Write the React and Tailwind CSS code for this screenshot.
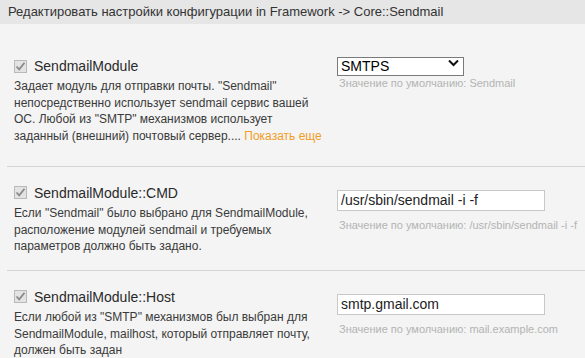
import { useState } from 'react';

// ── Data ─────────────────────────────────────────────────────────────────────

const SETTINGS = [
  {
    key: 'SendmailModule',
    desc: 'Задает модуль для отправки почты. "Sendmail" непосредственно использует sendmail сервис вашей ОС. Любой из "SMTP" механизмов использует заданный (внешний) почтовый сервер....',
    more: true,
    kind: 'select',
    value: 'SMTPS',
    options: ['Sendmail', 'SMTP', 'SMTPS', 'SMTPTLS'],
    def: 'Sendmail',
  },
  {
    key: 'SendmailModule::CMD',
    desc: 'Если "Sendmail" было выбрано для SendmailModule, расположение модулей sendmail и требуемых параметров должно быть задано.',
    kind: 'input',
    value: '/usr/sbin/sendmail -i -f',
    def: '/usr/sbin/sendmail -i -f',
  },
  {
    key: 'SendmailModule::Host',
    desc: 'Если любой из "SMTP" механизмов был выбран для SendmailModule, mailhost, который отправляет почту, должен быть задан',
    kind: 'input',
    value: 'smtp.gmail.com',
    def: 'mail.example.com',
  },
];

// ── Sub-components ───────────────────────────────────────────────────────────

/** Disabled, checked checkbox */
function GrayCheck() {
  return (
    <span className="w-[13px] h-[13px] shrink-0 border border-[#b9b9b9] bg-[#e3e3e3] flex items-center justify-center">
      <svg width="11" height="11" viewBox="0 0 11 11">
        <path d="M1.5 5.5 L4.2 8.3 L9.5 1.8" fill="none" stroke="#8a8a8a" strokeWidth="1.8" />
      </svg>
    </span>
  );
}

function SettingRow({ s, first }) {
  const [value, setValue] = useState(s.value);

  return (
    <div className={first ? 'pt-[32px] pb-[21px]' : 'ml-[7px] border-t border-[#d4d4d4] pt-[16px] pb-[15px]'}>
      <div className={`flex items-start ${first ? '' : '-ml-[7px]'}`}>
        {/* Left: title + description */}
        <div className="w-[337px] pl-[14px] shrink-0">
          <div className="flex items-center gap-[7px] h-[20px]">
            <GrayCheck />
            <span className="text-[14px] leading-[20px] text-[#2a2a2a]">{s.key}</span>
          </div>
          <p className="w-[314px] mt-[2px] text-[12px] leading-[16.7px] text-[#3a3a3a]">
            {s.desc}{' '}
            {s.more && <span className="text-[#f39c1f]">Показать еще</span>}
          </p>
        </div>

        {/* Right: value + default */}
        <div className={first ? '-mt-[2px]' : 'mt-[5px]'}>
          {s.kind === 'select' ? (
            <div className="relative w-[127px] h-[19px]">
              <select
                value={value}
                onChange={(e) => setValue(e.target.value)}
                className="appearance-none w-full h-full bg-white border border-[#7a7a7a] pl-[3px] text-[14px] leading-[17px] text-black outline-none"
              >
                {s.options.map((o) => (
                  <option key={o} value={o}>{o}</option>
                ))}
              </select>
              <svg
                className="absolute right-[5px] top-[5px] pointer-events-none"
                width="11" height="8" viewBox="0 0 11 8"
              >
                <path d="M1 1.5 L5.5 6 L10 1.5" fill="none" stroke="#111" strokeWidth="2" />
              </svg>
            </div>
          ) : (
            <input
              type="text"
              value={value}
              onChange={(e) => setValue(e.target.value)}
              className="w-[208px] h-[21px] bg-white border border-[#c8c8c8] px-[3px] text-[14px] text-[#222] outline-none"
            />
          )}
          <div className={`${first ? 'mt-[3px]' : 'mt-[6px]'} pl-[2px] text-[11px] leading-[14px] text-[#b3b3b3]`}>
            Значение по умолчанию: {s.def}
          </div>
        </div>
      </div>
    </div>
  );
}

// ── Main ─────────────────────────────────────────────────────────────────────

export default function App() {
  return (
    <div
      className="w-[585px] h-[358px] overflow-hidden bg-[#f4f4f4]"
      style={{ fontFamily: '"Liberation Sans", Arial, sans-serif' }}
    >
      {/* Header */}
      <div className="h-[24px] bg-[#e6e6e6] px-[8px] flex items-center text-[13px] text-[#333]">
        Редактировать настройки конфигурации in Framework -&gt; Core::Sendmail
      </div>

      {SETTINGS.map((s, i) => (
        <SettingRow key={s.key} s={s} first={i === 0} />
      ))}
    </div>
  );
}
